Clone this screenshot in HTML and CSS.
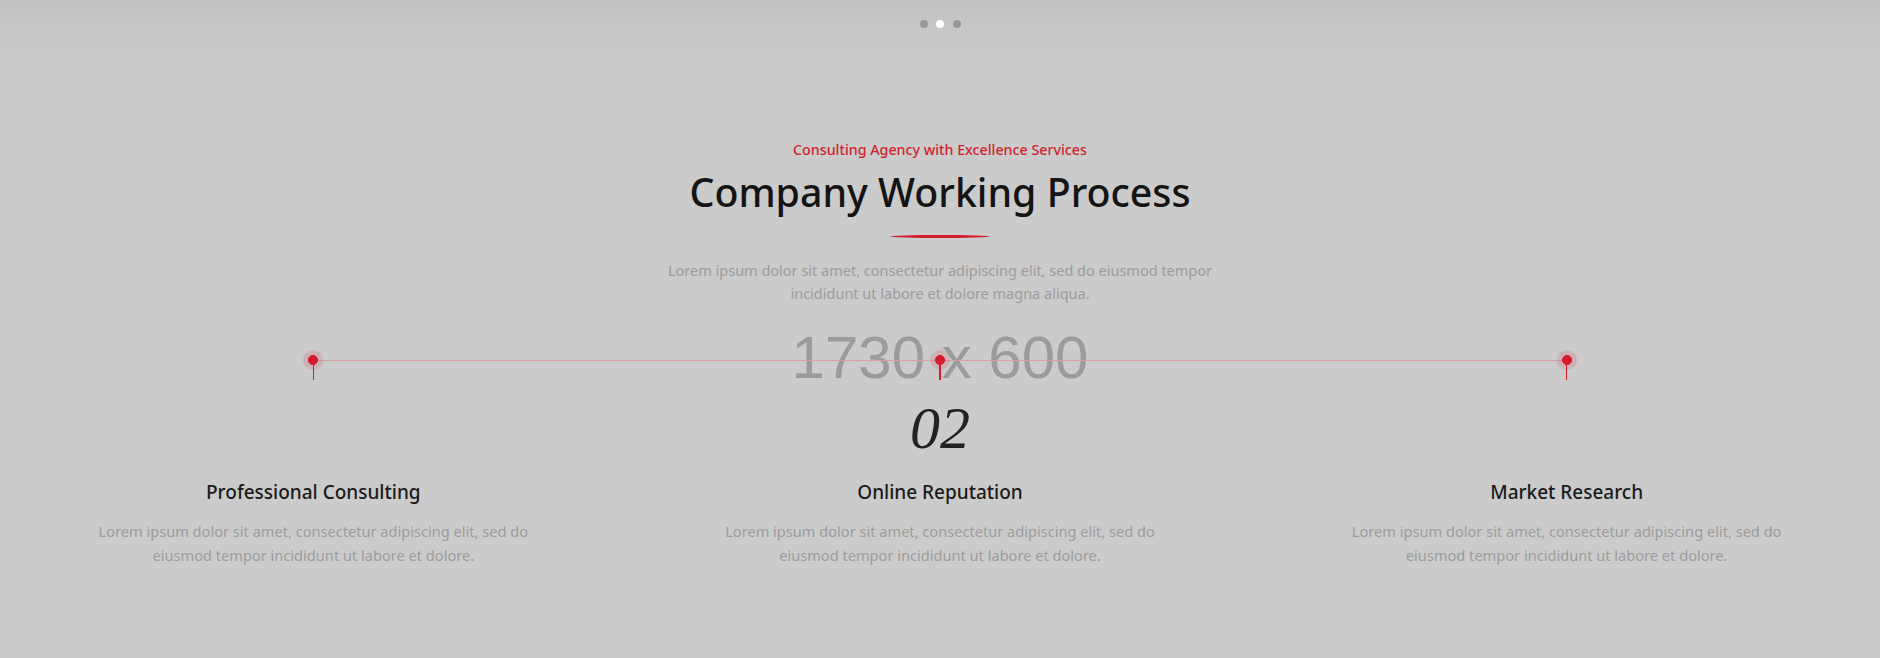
FILE: index.html
```html
<!DOCTYPE html>
<html lang="en">
<head>
<meta charset="utf-8">
<title>Company Working Process</title>
<link rel="stylesheet" href="styles.css">
</head>
<body>
<section class="process">
  <div class="placeholder-label">1730 x 600</div>
  <div class="dots">
    <span class="dot"></span>
    <span class="dot dot-active"></span>
    <span class="dot"></span>
  </div>
  <header class="intro">
    <p class="eyebrow">Consulting Agency with Excellence Services</p>
    <h2 class="title">Company Working Process</h2>
    <span class="title-rule"></span>
    <p class="lead">Lorem ipsum dolor sit amet, consectetur adipiscing elit, sed do eiusmod tempor incididunt ut labore et dolore magna aliqua.</p>
  </header>
  <div class="steps">
    <div class="step">
      <span class="pin"></span>
      <div class="step-num"></div>
      <h3 class="step-title">Professional Consulting</h3>
      <p class="step-text">Lorem ipsum dolor sit amet, consectetur adipiscing elit, sed do eiusmod tempor incididunt ut labore et dolore.</p>
    </div>
    <div class="step">
      <span class="pin"></span>
      <div class="step-num">02</div>
      <h3 class="step-title">Online Reputation</h3>
      <p class="step-text">Lorem ipsum dolor sit amet, consectetur adipiscing elit, sed do eiusmod tempor incididunt ut labore et dolore.</p>
    </div>
    <div class="step">
      <span class="pin"></span>
      <div class="step-num"></div>
      <h3 class="step-title">Market Research</h3>
      <p class="step-text">Lorem ipsum dolor sit amet, consectetur adipiscing elit, sed do eiusmod tempor incididunt ut labore et dolore.</p>
    </div>
  </div>
</section>
</body>
</html>
```

FILE: styles.css
```css
* { box-sizing: border-box; }

html, body {
  margin: 0;
  padding: 0;
}

body {
  width: 1880px;
  height: 658px;
  overflow: hidden;
  font-family: "Noto Sans", "Open Sans", sans-serif;
  background: #cbcbcb;
}

.process {
  position: relative;
  height: 658px;
  background: linear-gradient(#c1c1c1 0, #c8c8c8 30px, #cbcbcb 70px);
  display: flex;
  flex-direction: column;
  align-items: center;
}

.placeholder-label {
  position: absolute;
  left: 0;
  right: 0;
  top: 323px;
  text-align: center;
  font-family: "Liberation Sans", Arial, sans-serif;
  font-size: 60px;
  line-height: 70px;
  color: #9b9b9b;
}

.dots {
  position: relative;
  margin-top: 20px;
  display: flex;
  gap: 8.5px;
  height: 8px;
}

.dot {
  width: 8px;
  height: 8px;
  border-radius: 50%;
  background: #999999;
}

.dot-active {
  background: #ffffff;
}

.intro {
  position: relative;
  display: flex;
  flex-direction: column;
  align-items: center;
  text-align: center;
  margin-top: 112px;
}

.eyebrow {
  margin: 0;
  font-size: 14.25px;
  line-height: 20px;
  font-weight: 500;
  color: #d21f2d;
}

.title {
  margin: 8px 0 0;
  font-size: 39.3px;
  line-height: 48px;
  font-weight: 500;
  color: #141414;
}

.title-rule {
  display: block;
  width: 100px;
  height: 3px;
  margin-top: 19px;
  border-radius: 50%;
  background: #d21f2d;
}

.lead {
  margin: 20.5px 0 0;
  width: 580px;
  font-size: 14.5px;
  line-height: 23px;
  color: #9c9c9c;
}

.steps {
  position: relative;
  width: 100%;
  margin-top: 45px;
  display: grid;
  grid-template-columns: repeat(3, 1fr);
}

.steps::before {
  content: "";
  position: absolute;
  left: 16.6667%;
  right: 16.6667%;
  top: 10px;
  height: 1px;
  background: #d89ea3;
}

.step {
  display: flex;
  flex-direction: column;
  align-items: center;
  text-align: center;
}

.pin {
  position: relative;
  width: 20px;
  height: 30px;
  background: radial-gradient(circle at 10px 10px, #d61c2c 0 4.7px, transparent 5.2px) no-repeat;
}

.pin::before {
  content: "";
  position: absolute;
  left: 0;
  top: 0;
  width: 20px;
  height: 20px;
  border-radius: 50%;
  background: rgba(214, 28, 44, 0.14);
}

.pin::after {
  content: "";
  position: absolute;
  left: 9.25px;
  top: 10px;
  width: 1.5px;
  height: 20px;
  background: #d61c2c;
}

.step-num {
  margin-top: 18px;
  height: 60px;
  font-family: "Liberation Serif", "Times New Roman", serif;
  font-style: italic;
  font-size: 60px;
  line-height: 60px;
  color: #222222;
}

.step-title {
  margin: 21px 0 0;
  font-size: 19px;
  line-height: 26px;
  font-weight: 500;
  color: #1a1a1a;
}

.step-text {
  margin: 14px 0 0;
  max-width: 460px;
  font-size: 14.6px;
  line-height: 24px;
  color: #9c9c9c;
}
```
